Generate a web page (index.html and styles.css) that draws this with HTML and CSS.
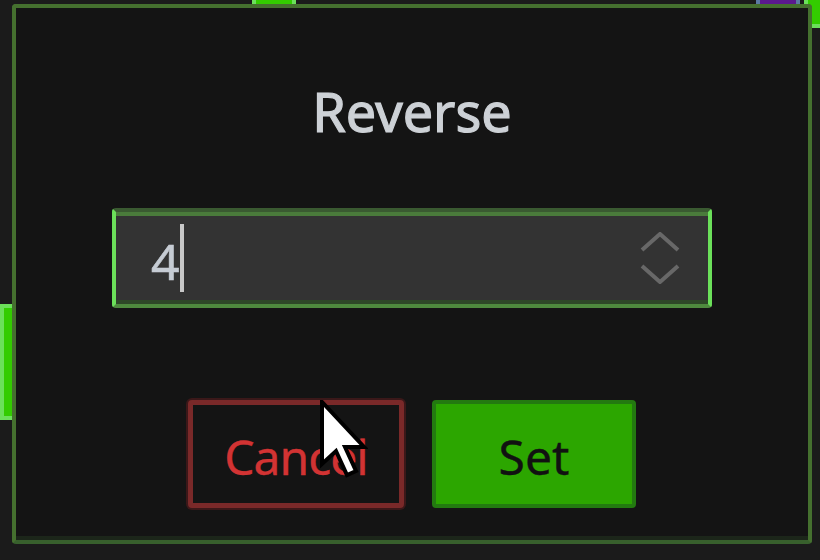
FILE: index.html
```html
<!DOCTYPE html>
<html lang="en">
  <head>
    <meta charset="UTF-8" />
    <meta name="viewport" content="width=device-width, initial-scale=1.0" />
    <title>Reverse</title>
    <link rel="stylesheet" href="styles.css">
  </head>
  <body>
    <span class="peek peek-top"></span>
    <span class="peek peek-purple"></span>
    <span class="peek peek-right"></span>
    <span class="peek peek-left"></span>

    <div class="dialog">
      <h1 class="title">Reverse</h1>

      <div class="field">
        <span class="value">4</span><span class="caret"></span>
        <svg class="spin" width="40" height="52" viewBox="0 0 40 52">
          <polyline points="2,18 20,2 38,18" />
          <polyline points="2,34 20,50 38,34" />
        </svg>
      </div>

      <div class="actions">
        <button class="btn btn-cancel">Cancel</button>
        <button class="btn btn-set">Set</button>
      </div>
    </div>

    <svg class="pointer" width="48" height="80" viewBox="0 0 48 80">
      <path d="M2 2 L2 64 L16 51 L27 75 L36 71 L25 47 L44 47 Z" />
    </svg>
  </body>
</html>
```

FILE: styles.css
```css
* {
  padding: 0;
  margin: 0;
  box-sizing: border-box;
}

body {
  font-family: "Noto Sans", "Open Sans", sans-serif;
  background: #1b1b1b;
  padding: 4px 0 0 12px;
  min-height: 100vh;
  overflow: hidden;
  position: relative;
}

/* bits of the window underneath the dialog */
.peek {
  position: absolute;
  border: 4px solid #6be05a;
  background: #33cc00;
}

.peek-top {
  left: 252px;
  top: -4px;
  width: 44px;
  height: 8px;
  border-bottom: 0;
}

.peek-purple {
  left: 756px;
  top: -4px;
  width: 44px;
  height: 8px;
  border-bottom: 0;
  border-color: #5b7aa3;
  background: #5b1a8e;
}

.peek-right {
  left: 804px;
  top: -8px;
  width: 24px;
  height: 36px;
}

.peek-left {
  left: 0;
  top: 304px;
  width: 20px;
  height: 116px;
}

.dialog {
  position: relative;
  z-index: 1;
  width: 800px;
  height: 540px;
  background: #141414;
  border: 4px solid #45702f;
  border-bottom-color: #38602d;
  border-radius: 4px;
  box-shadow: inset 0 -4px #1c261a;
  display: flex;
  flex-direction: column;
  align-items: center;
  padding-top: 71px;
}

.title {
  font-size: 54px;
  font-weight: 400;
  line-height: 64px;
  color: #cdd1d6;
  -webkit-text-stroke: 1.2px currentColor;
}

.field {
  margin-top: 65px;
  width: 600px;
  height: 100px;
  display: flex;
  align-items: center;
  padding: 0 28px 0 35px;
  background: #333333;
  border-left: 4px solid #6be05a;
  border-right: 4px solid #6be05a;
  border-top: 4px solid #3a5a31;
  border-bottom: 4px solid #4e8a3e;
  border-radius: 4px;
  box-shadow: inset 0 4px #4a7b3b, inset 0 -4px #2e4828;
}

.value {
  font-size: 50px;
  line-height: 68px;
  color: #c6ccd4;
  margin-top: 6px;
  -webkit-text-stroke: 0.6px currentColor;
}

.caret {
  width: 4px;
  height: 68px;
  background: #c8c8c8;
}

.spin {
  margin-left: auto;
  display: block;
}

.spin polyline {
  fill: none;
  stroke: #686868;
  stroke-width: 4;
}

.actions {
  margin-top: 92px;
  display: flex;
  gap: 28px;
}

.btn {
  height: 108px;
  display: flex;
  align-items: center;
  justify-content: center;
  padding-top: 5px;
  font-family: inherit;
  font-size: 48px;
  line-height: 1;
  border-radius: 4px;
  -webkit-text-stroke: 0.4px currentColor;
}

.btn-cancel {
  width: 216px;
  background: #141414;
  color: #d23333;
  border: 5px solid #7a2929;
  box-shadow: 0 0 0 2px #3b1819;
  letter-spacing: -1px;
}

.btn-set {
  width: 204px;
  background: #2ca600;
  color: #111111;
  border: 4px solid #237a10;
}

.pointer {
  position: absolute;
  z-index: 2;
  left: 320px;
  top: 400px;
}

.pointer path {
  fill: #ffffff;
  stroke: #000000;
  stroke-width: 4;
  stroke-linejoin: miter;
}
```
